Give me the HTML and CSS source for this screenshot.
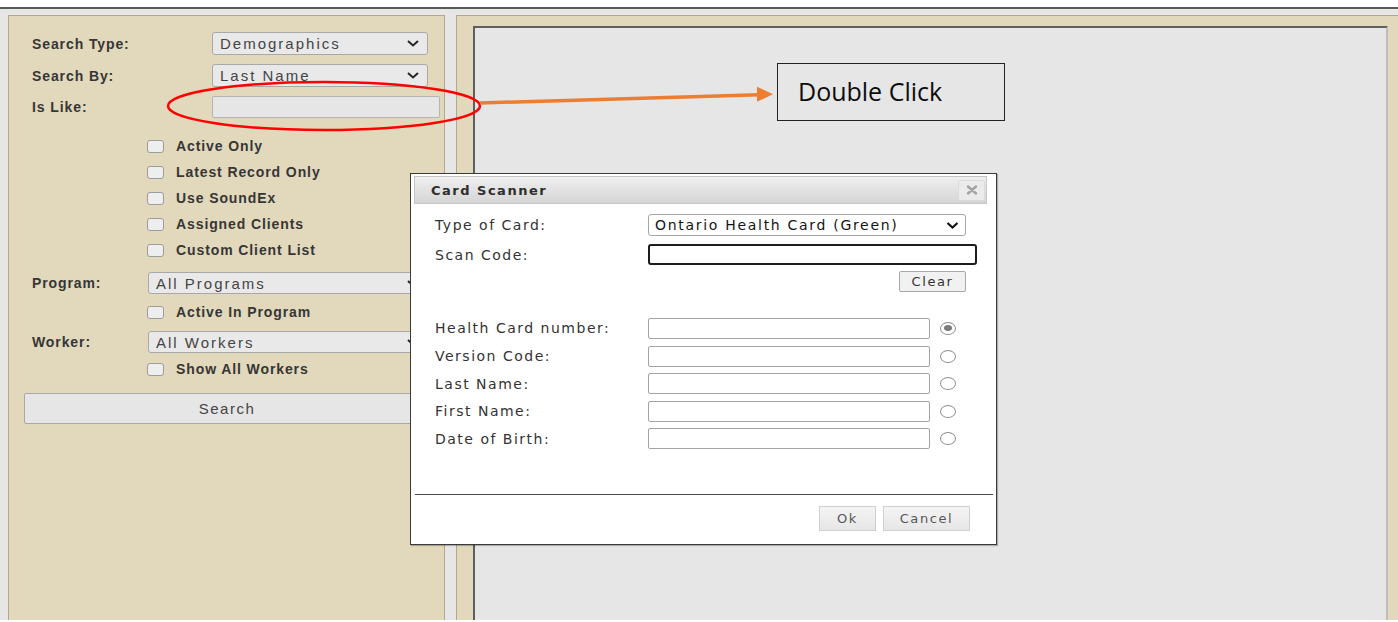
FILE: index.html
```html
<!DOCTYPE html>
<html lang="en">
<head>
<meta charset="utf-8">
<title>Client Search</title>
<link rel="stylesheet" href="styles.css">
</head>
<body>
<div class="workspace">
  <aside class="search-panel">
    <div class="field">
      <span class="field-label">Search Type:</span>
      <div class="select"><span>Demographics</span><svg class="chev" width="12" height="7" viewBox="0 0 12 7"><polyline points="1,1 6,5.5 11,1"/></svg></div>
    </div>
    <div class="field">
      <span class="field-label">Search By:</span>
      <div class="select"><span>Last Name</span><svg class="chev" width="12" height="7" viewBox="0 0 12 7"><polyline points="1,1 6,5.5 11,1"/></svg></div>
    </div>
    <div class="field field-input">
      <span class="field-label">Is Like:</span>
      <div class="text-input"></div>
    </div>

    <div class="check-list">
      <label class="check"><span class="check-box"></span>Active Only</label>
      <label class="check"><span class="check-box"></span>Latest Record Only</label>
      <label class="check"><span class="check-box"></span>Use SoundEx</label>
      <label class="check"><span class="check-box"></span>Assigned Clients</label>
      <label class="check"><span class="check-box"></span>Custom Client List</label>
    </div>

    <div class="field field-compact program-row">
      <span class="field-label narrow">Program:</span>
      <div class="select wide"><span>All Programs</span><svg class="chev" width="12" height="7" viewBox="0 0 12 7"><polyline points="1,1 6,5.5 11,1"/></svg></div>
    </div>
    <label class="check active-program"><span class="check-box"></span>Active In Program</label>
    <div class="field field-compact worker-row">
      <span class="field-label narrow">Worker:</span>
      <div class="select wide"><span>All Workers</span><svg class="chev" width="12" height="7" viewBox="0 0 12 7"><polyline points="1,1 6,5.5 11,1"/></svg></div>
    </div>
    <label class="check show-workers"><span class="check-box"></span>Show All Workers</label>

    <div class="search-button">Search</div>
  </aside>

  <section class="results-panel">
    <div class="results-view"></div>
  </section>
</div>

<div class="dialog">
  <div class="dialog-title">
    <span>Card Scanner</span>
    <span class="dialog-close"><svg width="12" height="10" viewBox="0 0 12 10"><path d="M2 1.5 L10 8.5 M10 1.5 L2 8.5"/></svg></span>
  </div>
  <div class="dialog-body">
    <div class="d-row">
      <span class="d-label">Type of Card:</span>
      <div class="d-select"><span>Ontario Health Card (Green)</span><svg class="d-chev" width="13" height="7" viewBox="0 0 13 7"><polyline points="1.5,1 6.5,5.5 11.5,1"/></svg></div>
    </div>
    <div class="d-row scan-row">
      <span class="d-label">Scan Code:</span>
      <div class="d-scan"></div>
    </div>
    <div class="d-row clear-row">
      <span class="d-button clear">Clear</span>
    </div>

    <div class="card-fields">
      <div class="d-row">
        <span class="d-label">Health Card number:</span>
        <div class="d-input"></div><span class="radio checked"></span>
      </div>
      <div class="d-row">
        <span class="d-label">Version Code:</span>
        <div class="d-input"></div><span class="radio"></span>
      </div>
      <div class="d-row">
        <span class="d-label">Last Name:</span>
        <div class="d-input"></div><span class="radio"></span>
      </div>
      <div class="d-row">
        <span class="d-label">First Name:</span>
        <div class="d-input"></div><span class="radio"></span>
      </div>
      <div class="d-row">
        <span class="d-label">Date of Birth:</span>
        <div class="d-input"></div><span class="radio"></span>
      </div>
    </div>
  </div>
  <div class="dialog-footer">
    <span class="d-button ok">Ok</span>
    <span class="d-button cancel">Cancel</span>
  </div>
</div>

<div class="callout">Double Click</div>

<svg class="marks" width="1398" height="622" viewBox="0 0 1398 622">
  <ellipse cx="324" cy="106" rx="156" ry="24" fill="none" stroke="#ff0000" stroke-width="2.5"/>
  <line x1="480" y1="103" x2="759" y2="94.7" stroke="#ed7d31" stroke-width="3.5"/>
  <polygon points="757,86.7 773,94.3 757,101.8" fill="#ed7d31"/>
</svg>
</body>
</html>
```

FILE: styles.css
```css
html, body {
  margin: 0;
  padding: 0;
}

body {
  width: 1398px;
  height: 622px;
  overflow: hidden;
  background: #ffffff;
  position: relative;
}

/* page chrome: thin rule under the header strip, grey work area below */
.workspace {
  margin-top: 7px;
  border-top: 2px solid #595959;
  height: 613px;
  box-sizing: border-box;
  background: #e6e6e6;
  padding: 6px 0 0 8px;
  display: flex;
}

/* ---------- search panel ---------- */
.search-panel {
  width: 437px;
  flex: none;
  box-sizing: border-box;
  border: 1px solid #b2a88b;
  border-bottom: none;
  background: #e2d8bb;
  padding: 16px 0 0 23px;
  font-family: "Liberation Sans", Arial, sans-serif;
  color: #333333;
  display: flex;
  flex-direction: column;
}

.field {
  display: flex;
  align-items: center;
  height: 23px;
}

.field + .field {
  margin-top: 9px;
}

.field-input {
  height: 22px;
}

.field-label {
  width: 180px;
  flex: none;
  font-size: 14px;
  font-weight: bold;
  letter-spacing: 0.9px;
  color: #363636;
}

.field-label.narrow {
  width: 116px;
}

.select {
  width: 216px;
  height: 100%;
  box-sizing: border-box;
  border: 1px solid #a8a8a8;
  border-radius: 3px;
  background: #e9e9e9;
  display: flex;
  align-items: center;
  justify-content: space-between;
  padding: 0 8px 0 7px;
  font-size: 15px;
  letter-spacing: 2px;
  color: #444444;
}

.select.wide {
  width: 280px;
}

.chev {
  flex: none;
}

.chev polyline {
  fill: none;
  stroke: #262626;
  stroke-width: 2;
}

.text-input {
  width: 228px;
  height: 22px;
  box-sizing: border-box;
  border: 1px solid #b4b4b4;
  border-radius: 2px;
  background: #e6e6e6;
}

.check-list {
  margin-top: 15px;
  display: flex;
  flex-direction: column;
}

.check {
  display: flex;
  align-items: center;
  height: 26px;
  margin-left: 115px;
  font-size: 14px;
  font-weight: bold;
  letter-spacing: 0.9px;
  color: #363636;
}

.check-box {
  width: 17px;
  height: 13px;
  box-sizing: border-box;
  border: 1px solid #9c9c9c;
  border-radius: 3px;
  background: #eeeeee;
  margin-right: 12px;
  flex: none;
}

.field.field-compact {
  height: 22px;
}

.program-row {
  margin-top: 9px;
}

.active-program {
  margin-top: 5px;
}

.field.worker-row {
  margin-top: 6px;
}

.show-workers {
  margin-top: 3px;
}

.search-button {
  margin: 11px 0 0 -8px;
  width: 406px;
  height: 31px;
  box-sizing: border-box;
  border: 1px solid #a9a9a9;
  border-radius: 2px;
  background: #e6e6e6;
  display: flex;
  align-items: center;
  justify-content: center;
  font-size: 15px;
  letter-spacing: 1.5px;
  color: #454545;
}

/* ---------- results panel ---------- */
.results-panel {
  flex: 1;
  margin-left: 11px;
  box-sizing: border-box;
  border-left: 1px solid #b2a88b;
  border-top: 1px solid #b2a88b;
  background: #e2d8bb;
  padding: 10px 10px 0 16px;
  display: flex;
}

.results-view {
  flex: 1;
  box-sizing: border-box;
  border-left: 2px solid #5e5e5e;
  border-top: 2px solid #5e5e5e;
  border-right: 2px solid #bdbdbd;
  background: #e6e6e6;
}

/* ---------- card scanner dialog ---------- */
.dialog {
  position: absolute;
  left: 410px;
  top: 173px;
  width: 587px;
  height: 372px;
  box-sizing: border-box;
  border: 1px solid #3a3a3a;
  background: #ffffff;
  box-shadow: 1px 1px 1px rgba(0, 0, 0, 0.25);
  display: flex;
  flex-direction: column;
  font-family: "DejaVu Sans", Verdana, sans-serif;
  font-size: 14px;
  color: #333333;
}

.dialog-title {
  margin: 2px 9px 0 3px;
  height: 28px;
  box-sizing: border-box;
  border: 1px solid #c6c6c6;
  background: linear-gradient(#efefef, #d5d5d5);
  display: flex;
  align-items: center;
  justify-content: space-between;
  padding: 0 1px 0 16px;
  font-weight: bold;
  font-size: 13px;
  letter-spacing: 1.5px;
  color: #2e2e2e;
}

.dialog-close {
  width: 27px;
  height: 21px;
  box-sizing: border-box;
  border: 1px solid #dadada;
  border-radius: 2px;
  background: #ebebeb;
  display: flex;
  align-items: center;
  justify-content: center;
}

.dialog-close path {
  stroke: #a3a3a3;
  stroke-width: 2.4;
  stroke-linecap: round;
}

.dialog-body {
  flex: 1;
  padding: 10px 0 0 24px;
}

.d-row {
  display: flex;
  align-items: center;
  height: 21px;
}

.d-row:first-child {
  height: 22px;
}

.d-label {
  width: 213px;
  flex: none;
  letter-spacing: 1.5px;
  color: #333333;
}

.d-select {
  width: 318px;
  height: 22px;
  box-sizing: border-box;
  border: 1px solid #a6a6a6;
  border-radius: 3px;
  display: flex;
  align-items: center;
  justify-content: space-between;
  padding: 0 6px 0 6px;
  letter-spacing: 1.7px;
  color: #141414;
}

.d-chev polyline {
  fill: none;
  stroke: #111111;
  stroke-width: 2.2;
}

.scan-row {
  margin-top: 8px;
}

.d-scan {
  width: 329px;
  height: 21px;
  box-sizing: border-box;
  border: 2px solid #1c1c1c;
  border-radius: 3px;
}

.clear-row {
  margin-top: 6px;
  width: 531px;
  justify-content: flex-end;
}

.d-button {
  box-sizing: border-box;
  display: flex;
  align-items: center;
  justify-content: center;
  font-size: 13px;
  letter-spacing: 1.6px;
}

.d-button.clear {
  width: 67px;
  height: 21px;
  border: 1px solid #a8a8a8;
  border-radius: 2px;
  background: #f1f1f1;
  color: #333333;
}

.card-fields {
  margin-top: 25px;
  display: flex;
  flex-direction: column;
  gap: 6.5px;
}

.d-input {
  width: 282px;
  height: 21px;
  box-sizing: border-box;
  border: 1px solid #a3a3a3;
  border-radius: 2px;
}

.radio {
  width: 16px;
  height: 13px;
  margin-left: 10px;
  box-sizing: border-box;
  border: 1px solid #8e8e8e;
  border-radius: 50%;
  background: #ffffff;
  position: relative;
}

.radio.checked::after {
  content: "";
  position: absolute;
  left: 3px;
  top: 2.5px;
  width: 8px;
  height: 6px;
  border-radius: 50%;
  background: #7b7b7b;
}

.dialog-footer {
  margin: 0 3px 0 4px;
  height: 50px;
  box-sizing: border-box;
  border-top: 1px solid #4a4a4a;
  display: flex;
  justify-content: flex-end;
  align-items: flex-start;
  gap: 7px;
  padding: 11px 23px 0 0;
}

.d-button.ok,
.d-button.cancel {
  height: 25px;
  border: 1px solid #d0d0d0;
  background: linear-gradient(#f4f4f4, #e6e6e6);
  color: #575757;
}

.d-button.ok {
  width: 57px;
}

.d-button.cancel {
  width: 87px;
}

/* ---------- annotation ---------- */
.callout {
  position: absolute;
  left: 777px;
  top: 63px;
  width: 228px;
  height: 58px;
  box-sizing: border-box;
  border: 1.5px solid #222222;
  display: flex;
  align-items: center;
  padding: 0 0 2px 20px;
  font-family: "Open Sans", sans-serif;
  font-size: 25px;
  color: #0d0d0d;
}

.marks {
  position: absolute;
  left: 0;
  top: 0;
  pointer-events: none;
}
```
